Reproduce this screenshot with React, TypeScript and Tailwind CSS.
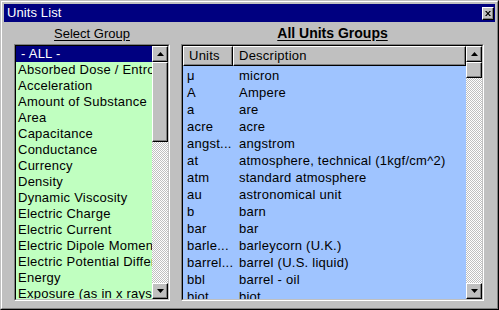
import React from 'react'

const groups = [
  'Absorbed Dose / Entropy',
  'Acceleration',
  'Amount of Substance',
  'Area',
  'Capacitance',
  'Conductance',
  'Currency',
  'Density',
  'Dynamic Viscosity',
  'Electric Charge',
  'Electric Current',
  'Electric Dipole Moment',
  'Electric Potential Difference',
  'Energy',
  'Exposure (as in x rays)',
]

const units: [string, string][] = [
  ['μ', 'micron'],
  ['A', 'Ampere'],
  ['a', 'are'],
  ['acre', 'acre'],
  ['angst...', 'angstrom'],
  ['at', 'atmosphere, technical (1kgf/cm^2)'],
  ['atm', 'standard atmosphere'],
  ['au', 'astronomical unit'],
  ['b', 'barn'],
  ['bar', 'bar'],
  ['barle...', 'barleycorn (U.K.)'],
  ['barrel...', 'barrel (U.S. liquid)'],
  ['bbl', 'barrel - oil'],
  ['biot', 'biot'],
]

function Arrow({ down }: { down?: boolean }) {
  return (
    <svg width="7" height="4" viewBox="0 0 7 4">
      <path d={down ? 'M0 0h7L3.5 4z' : 'M3.5 0L7 4H0z'} fill="#000" />
    </svg>
  )
}

function ScrollButton({ down }: { down?: boolean }) {
  return (
    <div className="w-[16px] h-[16px] shrink-0 bg-[#c0c0c0] border-t border-l border-white border-r border-b border-r-black border-b-black shadow-[inset_-1px_-1px_0_#808080] flex items-center justify-center">
      <Arrow down={down} />
    </div>
  )
}

function ScrollBar({ thumb }: { thumb: number }) {
  return (
    <div className="w-[16px] h-full flex flex-col shrink-0">
      <ScrollButton />
      <div className="flex-1 flex flex-col bg-[repeating-conic-gradient(#ffffff_0_25%,#c0c0c0_0_50%)] bg-[length:2px_2px]">
        <div
          className="w-[16px] bg-[#c0c0c0] border-t border-l border-white border-r border-b border-r-black border-b-black shadow-[inset_-1px_-1px_0_#808080]"
          style={{ height: thumb }}
        />
      </div>
      <ScrollButton down />
    </div>
  )
}

function Sunken({ className, children }: { className?: string; children: React.ReactNode }) {
  return (
    <div className={`border border-t-[#808080] border-l-[#808080] border-r-white border-b-white ${className ?? ''}`}>
      <div className="h-full border border-t-black border-l-black border-r-[#c0c0c0] border-b-[#c0c0c0] flex overflow-hidden">
        {children}
      </div>
    </div>
  )
}

export default function App() {
  return (
    <div className="w-[499px] h-[310px] bg-[#c0c0c0] font-['Liberation_Sans',Arial,sans-serif] text-[13px] text-black border border-t-[#c0c0c0] border-l-[#c0c0c0] border-r-black border-b-black">
      <div className="h-full border border-t-white border-l-white border-r-[#808080] border-b-[#808080] p-[2px] flex flex-col">
        {/* Title bar */}
        <div className="h-[18px] bg-[#000080] flex items-center justify-between pl-[3px] pr-[1px] shrink-0">
          <span className="text-white leading-[18px] tracking-[0.1px]">Units List</span>
          <div className="w-[12px] h-[13px] bg-[#c0c0c0] border-t border-l border-white border-r border-b border-r-black border-b-black shadow-[inset_-1px_-1px_0_#808080] flex items-center justify-center">
            <svg width="6" height="5" viewBox="0 0 6 5">
              <path d="M0 0h1.6L3 1.8 4.4 0H6L3.8 2.5 6 5H4.4L3 3.2 1.6 5H0l2.2-2.5z" fill="#000" />
            </svg>
          </div>
        </div>

        {/* Body */}
        <div className="flex-1 flex gap-[11px] pl-[10px] pr-[11px]">
          {/* Left: groups */}
          <div className="w-[156px] flex flex-col">
            <div className="h-[22px] flex items-center justify-center">
              <span className="underline underline-offset-2 leading-none">Select Group</span>
            </div>
            <Sunken className="h-[257px]">
              <div className="flex-1 bg-[#c0ffc0] overflow-hidden tracking-[0.25px]">
                <div className="h-[16px] leading-[16px] bg-[#000080] text-white pl-[5px] whitespace-nowrap">- ALL -</div>
                {groups.map(g => (
                  <div key={g} className="h-[16px] leading-[16px] pl-[2px] whitespace-nowrap">
                    {g}
                  </div>
                ))}
              </div>
              <ScrollBar thumb={80} />
            </Sunken>
          </div>

          {/* Right: units */}
          <div className="flex-1 flex flex-col">
            <div className="h-[22px] flex items-center justify-center">
              <span className="font-bold text-[14px] underline underline-offset-2 leading-none">All Units Groups</span>
            </div>
            <Sunken className="h-[257px]">
              <div className="flex-1 flex flex-col bg-[#9fc4ff] overflow-hidden tracking-[0.25px]">
                <div className="h-[20px] flex shrink-0 bg-[#c0c0c0]">
                  <div className="w-[50px] pl-[5px] leading-[17px] border-t border-l border-white border-r border-b border-r-black border-b-black shadow-[inset_-1px_-1px_0_#808080]">
                    Units
                  </div>
                  <div className="flex-1 pl-[5px] leading-[17px] border-t border-l border-white border-r border-b border-r-black border-b-black shadow-[inset_-1px_-1px_0_#808080]">
                    Description
                  </div>
                </div>
                <div className="pt-[1px]">
                  {units.map(([u, d]) => (
                    <div key={u} className="h-[17px] leading-[17px] flex whitespace-nowrap">
                      <span className="w-[50px] pl-[4px] shrink-0">{u}</span>
                      <span className="pl-[6px]">{d}</span>
                    </div>
                  ))}
                </div>
              </div>
              <ScrollBar thumb={16} />
            </Sunken>
          </div>
        </div>
      </div>
    </div>
  )
}
